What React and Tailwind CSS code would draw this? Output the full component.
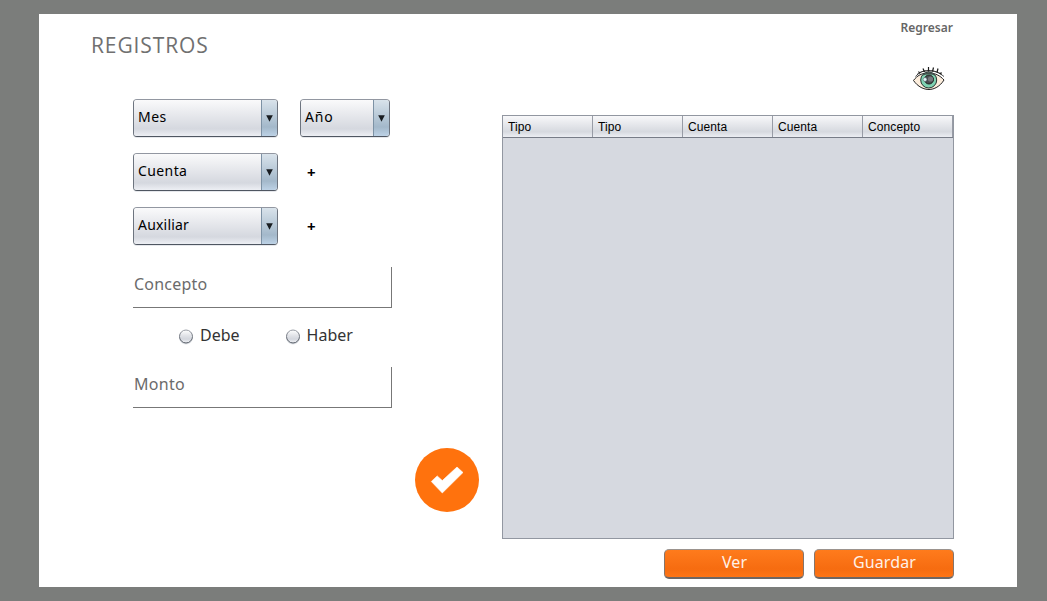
const FONT = "font-['Noto_Sans','Open_Sans',sans-serif]";

function Combo({ label, className, spacing = "" }) {
  return (
    <button
      className={`flex h-[38px] overflow-hidden rounded-[4px] border border-t-[#9297a1] border-x-[#6d747f] border-b-[#4f5661] text-left shadow-[0_1px_0_#e6e8ec] ${className}`}
    >
      <span className="flex h-full flex-1 items-center bg-linear-to-b from-[#fafafb] from-0% via-[#d5d8df] via-80% to-[#edeff4] pl-[4px] text-[14px] text-black">
        <span className={`-mt-[3px] ${spacing}`}>{label}</span>
      </span>
      <span className="flex h-full w-4 items-center justify-center border-l border-[#7d92a5] bg-linear-to-b from-[#d9e3eb] via-[#a3b8ca] via-75% to-[#bdd2e6]">
        <svg className="mt-px" width="7" height="7" viewBox="0 0 7 7">
          <path d="M0.2 0.300h6.600L3.500 6.700z" fill="#191d21" />
        </svg>
      </span>
    </button>
  );
}

function Field({ label, className, spacing }) {
  return (
    <div className={`h-[41px] w-[259px] border-r border-b border-[#777] pt-[5px] pl-px text-[16px] leading-6 text-[#6b6b6b] ${spacing} ${className}`}>
      {label}
    </div>
  );
}

function Radio({ label }) {
  return (
    <label className="flex h-6 items-start gap-[6px] text-[16px] leading-6 text-[#333]">
      <svg className="mt-[6px]" width="15" height="16" viewBox="0 0 15 16">
        <defs>
          <linearGradient id={label} x1="0" y1="0" x2="0" y2="1">
            <stop offset="0" stopColor="#fff" />
            <stop offset=".45" stopColor="#e0e2e7" />
            <stop offset=".7" stopColor="#d3d6dd" />
            <stop offset="1" stopColor="#f4f5f8" />
          </linearGradient>
          <linearGradient id={`${label}-edge`} x1="0" y1="0" x2="0" y2="1">
            <stop offset="0" stopColor="#9a9ea6" />
            <stop offset="1" stopColor="#4e545e" />
          </linearGradient>
        </defs>
        <circle cx="7" cy="8.500" r="7" fill="#e2e5e9" />
        <circle cx="7" cy="7.500" r="6.500" fill={`url(#${label})`} stroke={`url(#${label}-edge)`} />
      </svg>
      <span>{label}</span>
    </label>
  );
}

function Eye() {
  return (
    <svg width="34" height="26" viewBox="0 0 34 26" fill="none">
      <path d="M1.500 14.500C5 9.500 10 7 16.500 7S28 9.500 32 14C28 20.500 22 23.500 17 23.500S6 21 1.500 14.500z" fill="#fdeedd" stroke="#222" />
      <circle cx="16.700" cy="14" r="8" fill="#7fd3b2" stroke="#26332f" />
      <path d="M9.500 10Q17 2.500 24 10Q17 6.500 9.500 10z" fill="#46504e" />
      <circle cx="17" cy="13.500" r="4.500" fill="#484c50" stroke="#222" />
      <circle cx="18.500" cy="13" r="2.600" fill="#77797d" />
      <circle cx="13" cy="13.500" r="1.900" fill="#e4f3fb" stroke="#435759" strokeWidth=".5" />
      <path d="M3.500 10.500C7 6.500 11 4.500 16.500 4.500S27 6.500 32 10.500M5 8.500C9 5 13 5 16.500 5S25 5 30 8.500" stroke="#222" strokeWidth=".8" />
      <path d="M8 7.500L6.500 5.500M12.500 6L11 2.500M16.500 5.500V1M20.500 5.500L21.500 1.500M25 6.500L26 2.500M28 8L29.500 6.500" stroke="#1c1c1c" strokeWidth="1.200" />
    </svg>
  );
}

function ActionButton({ label }) {
  return (
    <button className="h-[30px] w-[140px] rounded-[5px] border border-b-2 border-t-[#9b938e] border-x-[#85756b] border-b-[#6f6663] bg-linear-to-b from-[#ff7b1c] via-[#f66c10] via-70% to-[#ff7516] pb-[3px] pl-px text-[16px] leading-6 tracking-[0.1px] text-[#fff1e8]">
      {label}
    </button>
  );
}

const columns = ["Tipo", "Tipo", "Cuenta", "Cuenta", "Concepto"];

export default function App() {
  return (
    <div className={`h-[601px] w-[1047px] bg-[#7b7d7b] pt-[14px] pl-[39px] ${FONT}`}>
      <main className="flex h-[573px] w-[978px] bg-white">
        <section className="flex w-[463px] flex-col">
          <h1 className="h-[85px] pt-[15px] pl-[52px] font-['Open_Sans','Noto_Sans',sans-serif] text-[21px] leading-8 font-normal tracking-[0.9px] text-[#707070]">REGISTROS</h1>
          <div className="flex flex-col gap-4 pl-[94px]">
            <div className="flex gap-[22px]">
              <Combo label="Mes" className="w-[145px]" spacing="tracking-[0.5px]" />
              <Combo label="Año" className="w-[90px]" spacing="tracking-[0.8px]" />
            </div>
            <div className="flex items-center gap-[29px]">
              <Combo label="Cuenta" className="w-[145px]" spacing="tracking-[0.4px]" />
              <button className="text-[15px] font-bold text-black">+</button>
            </div>
            <div className="flex items-center gap-[29px]">
              <Combo label="Auxiliar" className="w-[145px]" spacing="tracking-[0.2px]" />
              <button className="text-[15px] font-bold text-black">+</button>
            </div>
          </div>
          <Field label="Concepto" className="mt-[22px] ml-[94px]" spacing="tracking-[0.2px]" />
          <div className="mt-[15px] flex gap-[46px] pl-[140px]">
            <Radio label="Debe" />
            <Radio label="Haber" />
          </div>
          <Field label="Monto" className="mt-[20px] ml-[94px]" spacing="tracking-[0.3px]" />
          <button className="mt-10 ml-[376px] flex size-16 items-center justify-center rounded-full bg-[#ff720d]">
            <svg width="34" height="28" viewBox="0 0 34 28">
              <path d="M1.300 15.500L7.200 9.900L12.300 14.600L27 1L33 6.500L12.300 27z" fill="#fff" stroke="#fff" strokeWidth=".6" strokeLinejoin="round" />
            </svg>
          </button>
        </section>
        <section className="flex w-[452px] flex-col">
          <div className="flex h-[101px] flex-col items-end">
            <a className="mt-[5px] mr-px text-[12px] leading-[18px] font-semibold text-[#666]">Regresar</a>
            <div className="mt-[29px] mr-2">
              <Eye />
            </div>
          </div>
          <div className="h-[424px] border border-[#9297a1] bg-[#d6d9e0]">
            <div className="flex h-[22px] border-b border-[#777c87] bg-linear-to-b from-[#f8f8fa] via-[#d6d9df] via-75% to-[#eceef3]">
              {columns.map((name, i) => (
                <div key={i} className="w-[90px] border-r border-[#989ca6] pl-[5px] font-['Liberation_Sans',Arial,sans-serif] text-[12px] leading-[22px] tracking-[0.1px] text-black">
                  {name}
                </div>
              ))}
            </div>
          </div>
          <div className="mt-[10px] flex justify-end gap-[10px]">
            <ActionButton label="Ver" />
            <ActionButton label="Guardar" />
          </div>
        </section>
      </main>
    </div>
  );
}
